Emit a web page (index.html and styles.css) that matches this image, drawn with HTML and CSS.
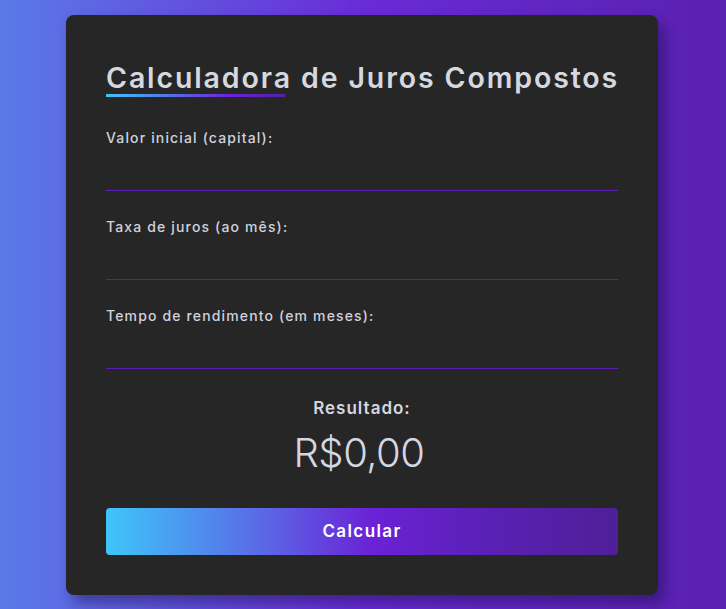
FILE: index.html
```html
<!DOCTYPE html>
<html lang="pt-BR">
<head>
<meta charset="utf-8">
<title>Calculadora de Juros Compostos</title>
<link rel="stylesheet" href="styles.css">
</head>
<body>
  <main class="card">
    <h1 class="title">Calculadora de Juros Compostos</h1>
    <div class="field">
      <label class="label" for="capital">Valor inicial (capital):</label>
      <input class="input" id="capital" type="text">
    </div>
    <div class="field">
      <label class="label" for="taxa">Taxa de juros (ao mês):</label>
      <input class="input" id="taxa" type="text">
    </div>
    <div class="field">
      <label class="label" for="tempo">Tempo de rendimento (em meses):</label>
      <input class="input" id="tempo" type="text">
    </div>
    <div class="result">
      <div class="result-label">Resultado:</div>
      <div class="result-value">R$0,00</div>
    </div>
    <button class="btn" type="button">Calcular</button>
  </main>
</body>
</html>
```
FILE: styles.css
```css
* { box-sizing: border-box; }
html, body { height: 100%; }
body {
  margin: 0;
  padding-right: 2px;
  min-height: 100vh;
  display: flex;
  align-items: center;
  justify-content: center;
  font-family: Inter, "Open Sans", sans-serif;
  background: linear-gradient(90deg, #5a7ae8 0%, #6a2bd8 50%, #5a20b0 100%);
}
.card {
  width: 592px;
  background: #262626;
  border-radius: 8px;
  padding: 45px 40px 40px;
  box-shadow: 6px 8px 14px rgba(20, 10, 60, 0.45);
  display: flex;
  flex-direction: column;
}
.title {
  margin: 0;
  font-size: 28.5px;
  line-height: 36px;
  font-weight: 600;
  color: #d6d8e0;
  letter-spacing: 1.88px;
  white-space: nowrap;
}
.title::after {
  content: "";
  display: block;
  width: 35%;
  height: 3px;
  margin-top: -2px;
  background: linear-gradient(90deg, #3ec4f8, #6a22d6 70%, #5520a8);
}
.field {
  display: flex;
  flex-direction: column;
  margin-top: 26px;
}
.field:first-of-type { margin-top: 31px; }
.label {
  font-size: 14px;
  line-height: 20px;
  font-weight: 500;
  color: #cfd2dc;
  letter-spacing: 1.15px;
}
.input {
  height: 43px;
  background: transparent;
  border: none;
  border-bottom: 1px solid #5a1fb8;
  color: #d6d8e0;
  font: inherit;
  outline: none;
  padding: 0;
}
.result {
  display: flex;
  flex-direction: column;
  align-items: center;
  margin-top: 27px;
  color: #d4d7e0;
}
.result-label {
  font-size: 17px;
  line-height: 24px;
  font-weight: 600;
  letter-spacing: 1px;
}
.result-value {
  margin-top: 10px;
  margin-right: 6px;
  font-size: 40px;
  line-height: 46px;
  font-weight: 300;
  letter-spacing: -0.5px;
}
.btn {
  margin-top: 32px;
  height: 47px;
  border: none;
  border-radius: 4px;
  background: linear-gradient(90deg, #3ec6fa 0%, #5a6ae6 30%, #6a22d6 52%, #5a20b4 75%, #4f1f98 100%);
  color: #ffffff;
  font-family: inherit;
  font-size: 17px;
  font-weight: 600;
  letter-spacing: 1.4px;
  cursor: pointer;
}
```
